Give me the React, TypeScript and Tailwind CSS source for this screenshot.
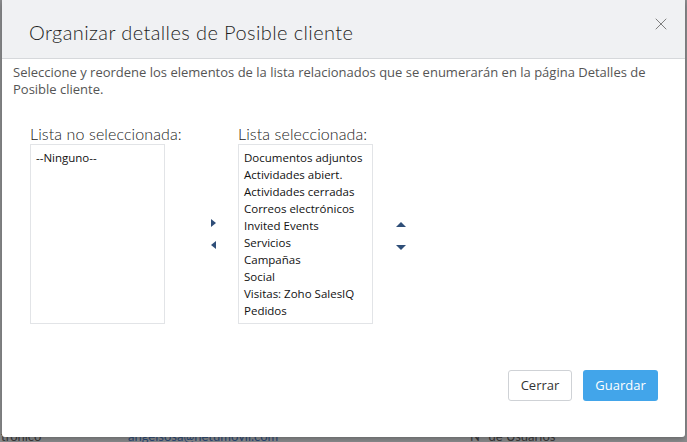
import React from 'react';
import { X } from 'lucide-react';

const SELECTED = [
  'Documentos adjuntos',
  'Actividades abiert.',
  'Actividades cerradas',
  'Correos electrónicos',
  'Invited Events',
  'Servicios',
  'Campañas',
  'Social',
  'Visitas: Zoho SalesIQ',
  'Pedidos',
];

const Tri: React.FC<{ dir: 'left' | 'right' | 'up' | 'down' }> = ({ dir }) => {
  const pts = {
    right: '2,1 7,5 2,9',
    left: '7,1 2,5 7,9',
    up: '0,7 5,2 10,7',
    down: '0,3 5,8 10,3',
  }[dir];
  return (
    <svg width="10" height="10" viewBox="0 0 10 10" className="block">
      <polygon points={pts} fill="#2f4e78" />
    </svg>
  );
};

export default function App() {
  return (
    <div className="relative w-[687px] h-[442px] overflow-hidden bg-[#8d8e90] font-['Lato',sans-serif]">
      {/* page behind the overlay */}
      <div className="flex h-full flex-col justify-end">
        <div className="flex h-[12px] items-start text-[13px] leading-[12px] text-[#3a3a3a]">
          <span className="w-[128px] pl-[1px]">trónico</span>
          <span className="w-[342px] text-[#2b4a78]">angelsosa@netumovil.com</span>
          <span>Nº de Usuarios</span>
        </div>
      </div>

      {/* modal */}
      <div className="absolute left-[2px] top-0 flex h-[437px] w-[683px] flex-col rounded-b-[3px] bg-white shadow-[0_2px_6px_rgba(0,0,0,0.3)]">
        <div className="flex h-[59px] items-start justify-between border-b border-[#d6d8db] bg-[#f0f1f3] pl-[27px] pr-[14px]">
          <h1 className="pt-[19px] text-[20px] leading-[26px] font-light tracking-[0.4px] text-[#1e1e1e]">Organizar detalles de Posible cliente</h1>
          <X className="mt-[14px] h-[20px] w-[20px] text-[#666]" strokeWidth={1} />
        </div>

        <p className="px-[11px] pt-[5px] font-['Open_Sans',sans-serif] text-[13px] leading-[17px] text-[#555]">
          Seleccione y reordene los elementos de la lista relacionados que se enumerarán en la página Detalles de Posible cliente.
        </p>

        <div className="mt-[26px] flex items-start pl-[28px]">
          <div className="flex w-[135px] flex-col">
            <span className="whitespace-nowrap text-[16px] leading-[20px] font-light tracking-[0.1px] text-[#222]">Lista no seleccionada:</span>
            <div className="h-[180px] w-[135px] border border-[#e2e4e7] px-[5px] pt-[4px] font-['Open_Sans',sans-serif] text-[11.5px] leading-[17px] text-[#111]">
              --Ninguno--
            </div>
          </div>

          <div className="flex w-[73px] flex-col items-start gap-[12px] pt-[94px] pl-[44px]">
            <Tri dir="right" />
            <Tri dir="left" />
          </div>

          <div className="flex w-[135px] flex-col">
            <span className="whitespace-nowrap text-[16px] leading-[20px] font-light tracking-[0.1px] text-[#222]">Lista seleccionada:</span>
            <div className="flex h-[180px] w-[135px] flex-col border border-[#e2e4e7] px-[5px] pt-[4px] font-['Open_Sans',sans-serif] text-[11.5px] leading-[17px] text-[#111]">
              {SELECTED.map((s) => (
                <span key={s} className="whitespace-nowrap">{s}</span>
              ))}
            </div>
          </div>

          <div className="flex w-[56px] flex-col items-center gap-[12px] pt-[96px]">
            <Tri dir="up" />
            <Tri dir="down" />
          </div>
        </div>

        <div className="mt-auto mb-[36px] flex justify-end gap-[11px] pr-[27px]">
          <button className="h-[31px] w-[64px] rounded-[3px] border border-[#cfd2d6] bg-white font-['Open_Sans',sans-serif] text-[13px] text-[#333]">
            Cerrar
          </button>
          <button className="h-[31px] w-[75px] rounded-[3px] bg-[#42a5ea] font-['Open_Sans',sans-serif] text-[13px] text-white">
            Guardar
          </button>
        </div>
      </div>
    </div>
  );
}
